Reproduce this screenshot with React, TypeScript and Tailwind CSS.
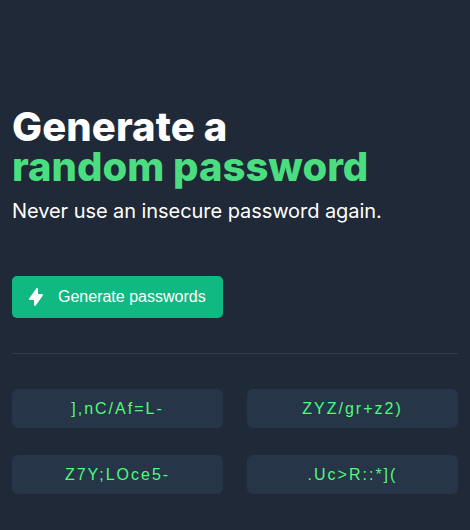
import React from "react";

const passwords: string[] = ["],nC/Af=L-", "ZYZ/gr+z2)", "Z7Y;LOce5-", ".Uc>R::*]("];

export default function App() {
  return (
    <main className="h-[530px] w-[470px] overflow-hidden bg-[#1f2937] px-3 pt-[107px] font-['Inter',sans-serif] text-white">
      <h1 className="text-[40px] leading-[40px] font-extrabold">
        <span className="block tracking-[0.1px]">Generate a</span>
        <span className="block text-[#4ade80]">random password</span>
      </h1>
      <p className="mt-2.5 text-[20px] leading-7 tracking-[-0.06px]">Never use an insecure password again.</p>
      <button className="mt-[51px] flex h-[42px] w-[211px] items-center rounded-[5px] bg-[#10b981] pl-3.5 font-['Liberation_Sans',Arial,sans-serif] text-base text-white">
        <svg className="mr-3 size-5" viewBox="0 0 20 20" fill="currentColor">
          <path d="M11.3 1.046A1 1 0 0112 2v5h4a1 1 0 01.82 1.573l-7 10A1 1 0 018 18v-5H4a1 1 0 01-.82-1.573l7-10a1 1 0 011.12-.38z" />
        </svg>
        Generate passwords
      </button>
      <hr className="mt-[35px] border-t border-[#2e3d4f]" />
      <div className="mt-[35px] grid grid-cols-2 gap-x-6 gap-y-[27px] font-['Liberation_Sans',Arial,sans-serif]">
        {passwords.map((password) => (
          <div key={password} className="flex h-[39px] items-center justify-center rounded-md bg-[#273549] text-base tracking-[2px] text-[#50fa7b]">
            {password}
          </div>
        ))}
      </div>
    </main>
  );
}
